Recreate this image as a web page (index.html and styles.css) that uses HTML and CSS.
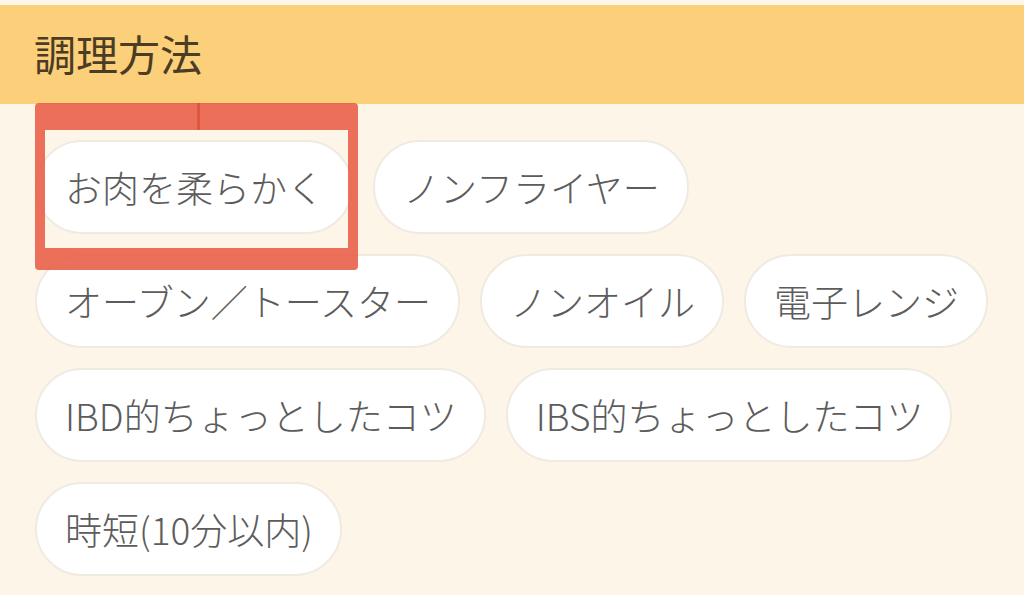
FILE: index.html
```html
<!DOCTYPE html>
<html lang="ja">
<head>
<meta charset="utf-8">
<link rel="stylesheet" href="styles.css">
</head>
<body>
<div class="page">
  <div class="header"><h2 class="title">調理方法</h2></div>
  <div class="chips">
    <span class="chip">お肉を柔らかく</span>
    <span class="chip">ノンフライヤー</span>
    <span class="chip">オーブン／トースター</span>
    <span class="chip">ノンオイル</span>
    <span class="chip">電子レンジ</span>
    <span class="chip">IBD的ちょっとしたコツ</span>
    <span class="chip">IBS的ちょっとしたコツ</span>
    <span class="chip">時短(10分以内)</span>
  </div>
  <div class="highlight"></div>
</div>
</body>
</html>
```
FILE: styles.css
```css
html, body {
  margin: 0;
  padding: 0;
  background: #fdf5e8;
  overflow: hidden;
}
.page {
  position: relative;
  width: 1024px;
  height: 595px;
  padding-top: 5px;
  box-sizing: border-box;
  font-family: "Noto Sans CJK JP", "Noto Sans", sans-serif;
}
.header {
  background: #fccf7b;
  height: 99px;
  display: flex;
  align-items: center;
  padding-left: 34px;
}
.title {
  margin: 0;
  font-size: 42px;
  font-weight: 400;
  color: #4b3c24;
  line-height: 1;
  padding-bottom: 4px;
}
.chips {
  display: flex;
  flex-wrap: wrap;
  gap: 20px 20px;
  padding: 36px 20px 0 35px;
}
.chip {
  display: flex;
  align-items: center;
  height: 94px;
  box-sizing: border-box;
  padding: 0 27px 0 28px;
  background: #ffffff;
  border: 2px solid #efebe3;
  border-radius: 47px;
  font-size: 37px;
  font-weight: 300;
  color: #5c5c5c;
  line-height: 1;
  white-space: nowrap;
}
.highlight {
  position: absolute;
  left: 35px;
  top: 103px;
  width: 323px;
  height: 167px;
  box-sizing: border-box;
  border-style: solid;
  border-color: rgba(232, 92, 68, 0.88);
  border-width: 27px 10px 22px 10px;
  border-radius: 4px;
}
.highlight::before {
  content: "";
  position: absolute;
  left: 152px;
  top: -27px;
  width: 3px;
  height: 27px;
  background: rgba(214, 70, 48, 0.6);
}
```
